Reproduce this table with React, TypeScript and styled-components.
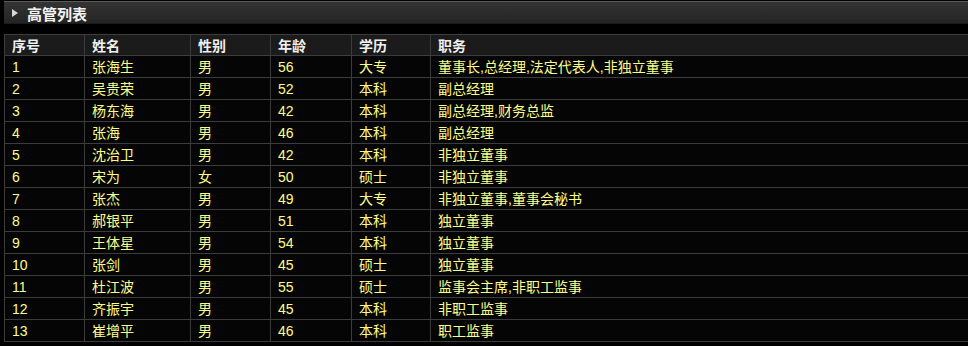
import React from "react";
import styled, { createGlobalStyle } from "styled-components";

const Global = createGlobalStyle`
  html, body { margin: 0; padding: 0; background: #000; }
  body { font-family: "Liberation Sans", "Noto Sans CJK SC", sans-serif; font-size: 14px; }
`;

const Page = styled.div`
  width: 968px;
  height: 346px;
  padding: 1px 0 0 4px;
  box-sizing: border-box;
  background: #000;
  overflow: hidden;
`;

const TitleBar = styled.div`
  height: 22px;
  display: flex;
  align-items: center;
  gap: 9px;
  padding-left: 8px;
  border-top: 1px solid #5c5c5c;
  background: linear-gradient(#343434, #232323);
  box-shadow: inset 0 -1px 0 #1a1a1a;
  color: #f2f2f2;
  font-weight: bold;
  font-size: 15px;
`;

const Arrow = styled.span`
  width: 0;
  height: 0;
  border-top: 4px solid transparent;
  border-bottom: 4px solid transparent;
  border-left: 6px solid #d8d8d8;
`;

const Table = styled.table`
  margin-top: 10px;
  width: 970px;
  border-collapse: collapse;
  table-layout: fixed;
  background: #050505;
`;

const HeadCell = styled.th<{ $w?: number }>`
  box-sizing: border-box;
  width: ${(p) => (p.$w ? `${p.$w}px` : "auto")};
  height: 21px;
  padding: 0 0 0 7px;
  text-align: left;
  font-weight: bold;
  color: #f0f0f0;
  background: #1b1b1b;
  border: 1px solid #3c3c3c;
  white-space: nowrap;
`;

const Cell = styled.td`
  height: 21px;
  padding: 0 0 0 7px;
  color: #ffff88;
  border: 1px solid #3c3c3c;
  white-space: nowrap;
  line-height: 16px;
`;

const cols: { label: string; w?: number }[] = [
  { label: "序号", w: 80 },
  { label: "姓名", w: 106 },
  { label: "性别", w: 80 },
  { label: "年龄", w: 81 },
  { label: "学历", w: 79 },
  { label: "职务" },
];

const rows: string[][] = [
  ["1", "张海生", "男", "56", "大专", "董事长,总经理,法定代表人,非独立董事"],
  ["2", "吴贵荣", "男", "52", "本科", "副总经理"],
  ["3", "杨东海", "男", "42", "本科", "副总经理,财务总监"],
  ["4", "张海", "男", "46", "本科", "副总经理"],
  ["5", "沈治卫", "男", "42", "本科", "非独立董事"],
  ["6", "宋为", "女", "50", "硕士", "非独立董事"],
  ["7", "张杰", "男", "49", "大专", "非独立董事,董事会秘书"],
  ["8", "郝银平", "男", "51", "本科", "独立董事"],
  ["9", "王体星", "男", "54", "本科", "独立董事"],
  ["10", "张剑", "男", "45", "硕士", "独立董事"],
  ["11", "杜江波", "男", "55", "硕士", "监事会主席,非职工监事"],
  ["12", "齐振宇", "男", "45", "本科", "非职工监事"],
  ["13", "崔增平", "男", "46", "本科", "职工监事"],
];

export default function App() {
  return (
    <Page>
      <Global />
      <TitleBar>
        <Arrow />
        <span>高管列表</span>
      </TitleBar>
      <Table>
        <thead>
          <tr>
            {cols.map((c) => (
              <HeadCell key={c.label} $w={c.w}>
                {c.label}
              </HeadCell>
            ))}
          </tr>
        </thead>
        <tbody>
          {rows.map((r) => (
            <tr key={r[0]}>
              {r.map((v, i) => (
                <Cell key={i}>{v}</Cell>
              ))}
            </tr>
          ))}
        </tbody>
      </Table>
    </Page>
  );
}
